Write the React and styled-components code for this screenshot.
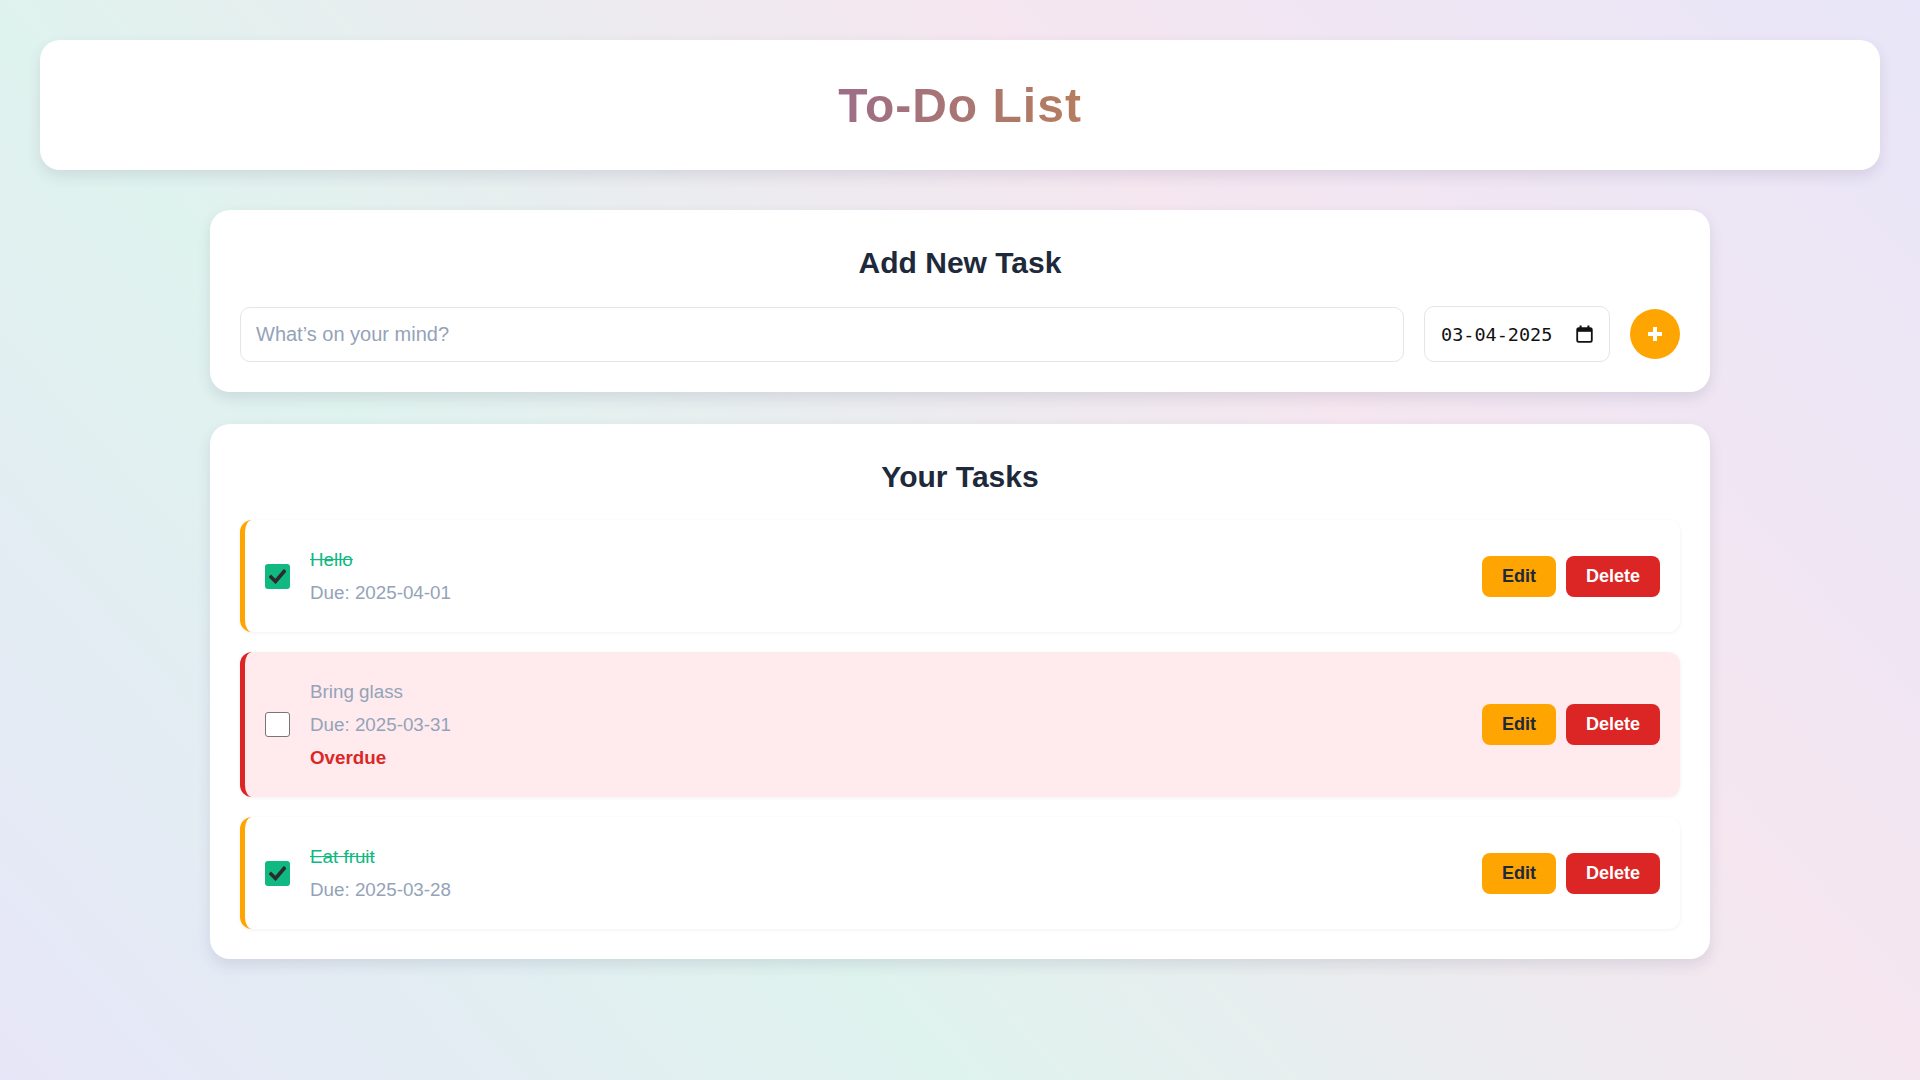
import React from 'react';
import styled, { createGlobalStyle } from 'styled-components';

const GlobalStyle = createGlobalStyle`
  * { box-sizing: border-box; }
  html, body {
    margin: 0;
    padding: 0;
  }
  body {
    min-height: 100vh;
    font-family: "Liberation Sans", Arial, sans-serif;
    background: linear-gradient(48deg, #e7e6f8 0%, #dff3ee 33%, #f5e6f0 67%, #e8e6f8 100%);
    background-attachment: fixed;
  }
`;

const Page = styled.div`
  min-height: 100vh;
  padding: 40px;
  display: flex;
  flex-direction: column;
  align-items: center;
  gap: 40px;
`;

const Header = styled.header`
  width: 100%;
  height: 130px;
  background: #fff;
  border-radius: 20px;
  box-shadow: 0 6px 14px rgba(60, 60, 90, 0.12);
  display: flex;
  align-items: center;
  justify-content: center;
`;

const Title = styled.h1`
  margin: 0;
  font-size: 48px;
  font-weight: 700;
  letter-spacing: 1px;
  background: linear-gradient(90deg, #9c6e88, #b67d5e);
  -webkit-background-clip: text;
  background-clip: text;
  color: transparent;
`;

const Main = styled.main`
  width: 100%;
  max-width: 1500px;
  display: flex;
  flex-direction: column;
  gap: 32px;
`;

const Card = styled.section`
  background: #fff;
  border-radius: 20px;
  padding: 30px;
  box-shadow: 0 6px 14px rgba(60, 60, 90, 0.12);
`;

const CardTitle = styled.h2`
  margin: 0 0 21px;
  text-align: center;
  font-size: 30px;
  line-height: 45px;
  font-weight: 700;
  color: #1e293b;
`;

const AddRow = styled.div`
  display: flex;
  align-items: center;
  gap: 20px;
`;

const TextInput = styled.input`
  flex: 1;
  height: 55px;
  padding: 0 15px;
  border: 1px solid #e2e5ea;
  border-radius: 10px;
  font-family: "Liberation Sans", Arial, sans-serif;
  font-size: 20px;
  color: #1e293b;
  outline: none;
  &::placeholder { color: #94a3b8; }
`;

const DateBox = styled.div`
  width: 186px;
  height: 56px;
  padding: 0 16px;
  border: 1px solid #e2e5ea;
  border-radius: 10px;
  display: flex;
  align-items: center;
  justify-content: space-between;
  font-family: "DejaVu Sans Mono", monospace;
  font-size: 18.5px;
  color: #111;
`;

const AddButton = styled.button`
  width: 50px;
  height: 50px;
  border-radius: 50%;
  border: none;
  background: #ffa502;
  display: flex;
  align-items: center;
  justify-content: center;
  flex-shrink: 0;
  cursor: pointer;
  padding: 0;
`;

const TaskList = styled.ul`
  list-style: none;
  margin: 0;
  padding: 0;
  display: flex;
  flex-direction: column;
  gap: 20px;
`;

const TaskItem = styled.li`
  display: flex;
  align-items: center;
  gap: 20px;
  padding: 26px 20px;
  border-radius: 12px;
  border-left: 5px solid ${p => (p.$overdue ? '#dc2626' : '#ffa502')};
  background: ${p => (p.$overdue ? '#ffebee' : '#fff')};
  box-shadow: 0 1px 4px rgba(0, 0, 0, 0.06);
`;

const Check = styled.span`
  width: 25px;
  height: 25px;
  flex-shrink: 0;
  border-radius: 3px;
  display: flex;
  align-items: center;
  justify-content: center;
  background: ${p => (p.$checked ? '#10b981' : '#fff')};
  border: ${p => (p.$checked ? 'none' : '1.5px solid #767676')};
`;

const TaskBody = styled.div`
  flex: 1;
  display: flex;
  flex-direction: column;
  gap: 6px;
`;

const TaskName = styled.span`
  font-size: 18.8px;
  line-height: 27px;
  color: ${p => (p.$done ? '#10b981' : '#94a3b8')};
  text-decoration: ${p => (p.$done ? 'line-through' : 'none')};
`;

const DueText = styled.span`
  font-size: 18.8px;
  line-height: 27px;
  color: #94a3b8;
`;

const OverdueText = styled.span`
  font-size: 18.8px;
  line-height: 27px;
  font-weight: 700;
  color: #dc2626;
`;

const Actions = styled.div`
  display: flex;
  gap: 10px;
`;

const ActionButton = styled.button`
  height: 41px;
  padding: 0 20px;
  border: none;
  border-radius: 8px;
  font-family: "Liberation Sans", Arial, sans-serif;
  font-size: 18px;
  font-weight: 700;
  cursor: pointer;
  background: ${p => (p.$danger ? '#dc2626' : '#ffa502')};
  color: ${p => (p.$danger ? '#fff' : '#1e293b')};
`;

const CheckMark = () => (
  <svg width="17" height="15" viewBox="0 0 17 15">
    <path d="M2 8 L6.5 12.5 L15 2.5" fill="none" stroke="#2b2b2b" strokeWidth="3.6" strokeLinecap="square" />
  </svg>
);

const CalendarIcon = () => (
  <svg width="17" height="18" viewBox="0 0 17 18">
    <rect x="1.2" y="3.2" width="14.6" height="13.6" rx="1.6" fill="none" stroke="#111" strokeWidth="1.8" />
    <rect x="1.2" y="3.2" width="14.6" height="3.6" fill="#111" />
    <rect x="3.6" y="0.5" width="2" height="3.5" fill="#111" />
    <rect x="11.4" y="0.5" width="2" height="3.5" fill="#111" />
  </svg>
);

const PlusIcon = () => (
  <svg width="18" height="18" viewBox="0 0 18 18">
    <path d="M9 2 V16 M2 9 H16" stroke="#fff" strokeWidth="4" strokeLinecap="butt" />
  </svg>
);

const tasks = [
  { id: 1, text: 'Hello', due: '2025-04-01', done: true, overdue: false },
  { id: 2, text: 'Bring glass', due: '2025-03-31', done: false, overdue: true },
  { id: 3, text: 'Eat fruit', due: '2025-03-28', done: true, overdue: false },
];

const App = () => {
  return (
    <>
      <GlobalStyle />
      <Page>
        <Header>
          <Title>To-Do List</Title>
        </Header>
        <Main>
          <Card>
            <CardTitle>Add New Task</CardTitle>
            <AddRow>
              <TextInput placeholder="What’s on your mind?" />
              <DateBox>
                <span>03-04-2025</span>
                <CalendarIcon />
              </DateBox>
              <AddButton aria-label="Add task">
                <PlusIcon />
              </AddButton>
            </AddRow>
          </Card>
          <Card>
            <CardTitle>Your Tasks</CardTitle>
            <TaskList>
              {tasks.map(t => (
                <TaskItem key={t.id} $overdue={t.overdue}>
                  <Check $checked={t.done}>{t.done && <CheckMark />}</Check>
                  <TaskBody>
                    <TaskName $done={t.done}>{t.text}</TaskName>
                    <DueText>Due: {t.due}</DueText>
                    {t.overdue && <OverdueText>Overdue</OverdueText>}
                  </TaskBody>
                  <Actions>
                    <ActionButton>Edit</ActionButton>
                    <ActionButton $danger>Delete</ActionButton>
                  </Actions>
                </TaskItem>
              ))}
            </TaskList>
          </Card>
        </Main>
      </Page>
    </>
  );
};

export default App;
